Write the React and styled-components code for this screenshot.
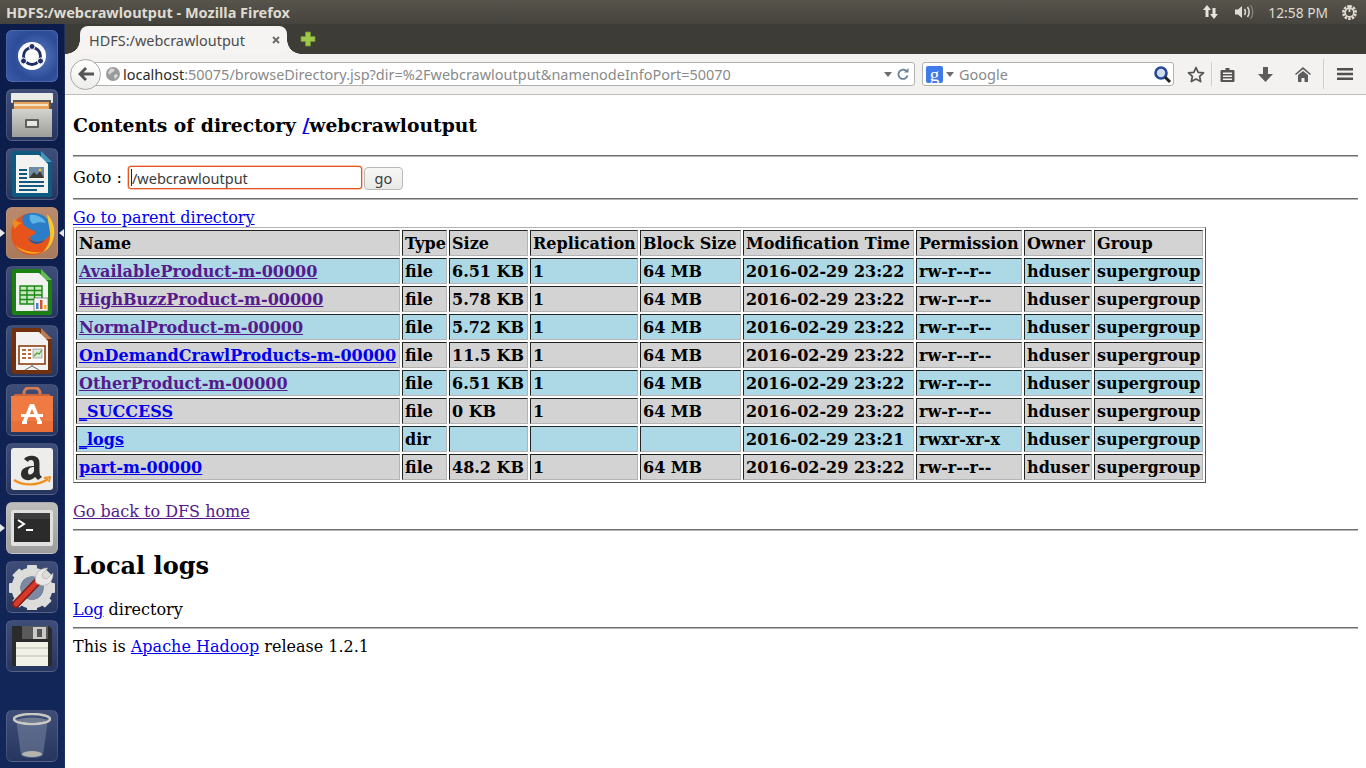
import React from 'react';
import styled, { createGlobalStyle } from 'styled-components';

const UI_FONT = '"Noto Sans", "Open Sans", sans-serif';

const rows = [
	{ name: 'AvailableProduct-m-00000', type: 'file', size: '6.51 KB', rep: '1', block: '64 MB', time: '2016-02-29 23:22', perm: 'rw-r--r--', visited: true },
	{ name: 'HighBuzzProduct-m-00000', type: 'file', size: '5.78 KB', rep: '1', block: '64 MB', time: '2016-02-29 23:22', perm: 'rw-r--r--', visited: true },
	{ name: 'NormalProduct-m-00000', type: 'file', size: '5.72 KB', rep: '1', block: '64 MB', time: '2016-02-29 23:22', perm: 'rw-r--r--', visited: true },
	{ name: 'OnDemandCrawlProducts-m-00000', type: 'file', size: '11.5 KB', rep: '1', block: '64 MB', time: '2016-02-29 23:22', perm: 'rw-r--r--' },
	{ name: 'OtherProduct-m-00000', type: 'file', size: '6.51 KB', rep: '1', block: '64 MB', time: '2016-02-29 23:22', perm: 'rw-r--r--', visited: true },
	{ name: '_SUCCESS', type: 'file', size: '0 KB', rep: '1', block: '64 MB', time: '2016-02-29 23:22', perm: 'rw-r--r--' },
	{ name: '_logs', type: 'dir', size: '', rep: '', block: '', time: '2016-02-29 23:21', perm: 'rwxr-xr-x' },
	{ name: 'part-m-00000', type: 'file', size: '48.2 KB', rep: '1', block: '64 MB', time: '2016-02-29 23:22', perm: 'rw-r--r--' },
];

const columns = [
	{ title: 'Name', width: 324 },
	{ title: 'Type', width: 45 },
	{ title: 'Size', width: 79 },
	{ title: 'Replication', width: 108 },
	{ title: 'Block Size', width: 101 },
	{ title: 'Modification Time', width: 171 },
	{ title: 'Permission', width: 106 },
	{ title: 'Owner', width: 68 },
	{ title: 'Group', width: 109 },
];

const UbuntuIcon = () => (
	<svg width="36" height="36" viewBox="0 0 36 36">
		<circle cx="18" cy="18" r="14" fill="#fff" />
		<circle cx="18" cy="18" r="8.500" fill="none" stroke="#1e2f66" strokeWidth="2.800" />
		<circle cx="18" cy="8.500" r="3" fill="#1e2f66" stroke="#fff" />
		<circle cx="9.500" cy="23" r="3" fill="#1e2f66" stroke="#fff" />
		<circle cx="26.500" cy="23" r="3" fill="#1e2f66" stroke="#fff" />
	</svg>
);

const FilesIcon = () => (
	<svg width="44" height="46" viewBox="0 0 44 46">
		<defs>
			<linearGradient id="cabinet" x1="0" y1="0" x2="0" y2="1">
				<stop offset="0" stopColor="#d2d2ce" />
				<stop offset="1" stopColor="#9d9d99" />
			</linearGradient>
		</defs>
		<rect x="1" y="1" width="42" height="10" rx="1" fill="#e9e9e5" />
		<rect x="3" y="8" width="38" height="13" fill="#5c5a56" />
		<rect x="4" y="10" width="35" height="9" fill="#e8a35c" />
		<rect x="4" y="12" width="34" height="2" fill="#f5e3c4" />
		<rect x="2" y="17" width="40" height="28" fill="url(#cabinet)" />
		<rect x="15" y="27" width="14" height="9" rx="1" fill="#5f5f5c" />
		<rect x="17" y="29" width="10" height="5" fill="#e6e6e4" />
	</svg>
);

const DocIcon = ({ edge, corner, children }) => (
	<svg width="42" height="48" viewBox="0 0 42 48">
		<path d="M1 3a2 2 0 0 1 2-2h26l12 12v32a2 2 0 0 1-2 2H3a2 2 0 0 1-2-2z" fill={edge} />
		<path d="M30 1l11 11H30z" fill={corner} />
		<path d="M5 5h23l9 9v29H5z" fill="#f2f2f0" />
		{children}
	</svg>
);

const WriterIcon = () => (
	<DocIcon edge="#0e5a80" corner="#3f95c0">
		<path d="M8 19h8v2H8zM8 23h8v2H8zM8 27h8v2H8zM8 31h25v2H8zM8 35h25v2H8zM8 39h18v2H8z" fill="#12587f" />
		<rect x="18" y="17" width="15" height="11" fill="#6c8ca8" />
		<path d="M18 28l5-6 3 3 3-4 4 7z" fill="#3a3a30" />
		<circle cx="29" cy="20" r="1.500" fill="#f0c040" />
	</DocIcon>
);

const CalcIcon = () => (
	<DocIcon edge="#1a8012" corner="#63bb58">
		<path d="M9 18h22v18H9z" fill="#c8e6c0" />
		<path d="M9 18h22v18H9zM9 22.500h22M9 27h22M9 31.500h22M16 18v18M23.500 18v18" fill="none" stroke="#1a8a14" strokeWidth="1.400" />
		<rect x="23" y="30" width="14" height="13" fill="#f4f4f4" stroke="#555" strokeWidth=".6" />
		<rect x="25" y="35" width="2.500" height="6" fill="#3d86c6" />
		<rect x="29" y="32" width="2.500" height="9" fill="#d9502c" />
		<rect x="33" y="37" width="2.500" height="4" fill="#eeb32c" />
	</DocIcon>
);

const ImpressIcon = () => (
	<DocIcon edge="#71310e" corner="#bd7b52">
		<rect x="8" y="19" width="26" height="18" fill="#fff" stroke="#8c3f12" strokeWidth="1.600" />
		<path d="M11 22h4v2h-4zM17 22h3v2h-3zM11 26h4v2h-4zM17 26h3v2h-3zM11 30h4v2h-4zM17 30h3v2h-3z" fill="#b9683a" />
		<rect x="22" y="22" width="9" height="9" fill="#dfe6d8" stroke="#666" strokeWidth=".5" />
		<path d="M23 29l3-3 2 1 3-4" stroke="#47a030" fill="none" strokeWidth="1.200" />
		<path d="M21 37v2l-7 4M21 39l7 4" stroke="#666" strokeWidth="1" fill="none" />
	</DocIcon>
);

const SoftwareIcon = () => (
	<svg width="44" height="46" viewBox="0 0 44 46">
		<path d="M14 10V6a5 5 0 0 1 5-5h6a5 5 0 0 1 5 5v4" fill="none" stroke="#d87b50" strokeWidth="3" />
		<path d="M2 10l3-3h34l3 3z" fill="#c9653a" />
		<rect x="1" y="9" width="42" height="36" fill="#ef7a42" />
		<rect x="1" y="34" width="42" height="11" fill="#e96f39" />
		<path d="M20 17h4l8 19h-4l-6-14-6 14h-4z" fill="#fff" />
		<rect x="11" y="27" width="22" height="3" fill="#fff" />
		<rect x="12" y="34" width="5" height="3" fill="#fff" />
		<rect x="27" y="34" width="5" height="3" fill="#fff" />
	</svg>
);

const AmazonIcon = () => (
	<svg width="42" height="42" viewBox="0 0 42 42">
		<rect x="0" y="0" width="42" height="42" rx="3" fill="#ededeb" />
		<path d="M13 11c2-4 13-5 15 1 1 3 0 11 1 15l2 2-4 3-3-3c-4 5-14 4-14-3 0-7 8-8 13-8 0-3 0-6-3-6-2 0-3 1-3 2zM23 19c-3 0-6 1-6 5 0 4 5 3 6-1z" fill="#2d2d2d" fillRule="evenodd" />
		<path d="M3 32c9 6 24 6 34-1" fill="none" stroke="#f09020" strokeWidth="2.200" />
		<path d="M33 30l6-1-1 5" fill="none" stroke="#f09020" strokeWidth="1.800" />
	</svg>
);

const TerminalIcon = () => (
	<svg width="42" height="36" viewBox="0 0 42 36">
		<rect x="0" y="0" width="42" height="36" rx="2" fill="#e0e0de" />
		<rect x="3" y="3" width="36" height="29" fill="#2b2b2b" />
		<rect x="3" y="3" width="36" height="6" fill="#3d3d3d" />
		<path d="M7 10l6 4-6 4" fill="none" stroke="#fff" strokeWidth="2" />
		<path d="M15 20h7" stroke="#fff" strokeWidth="2" />
	</svg>
);

const SettingsIcon = () => (
	<svg width="46" height="46" viewBox="0 0 46 46">
		<g transform="translate(23 24)">
			<circle r="16" fill="none" stroke="#dcdcda" strokeWidth="9" />
			{[0, 45, 90, 135, 180, 225, 270, 315].map((a) => (
				<rect key={a} x="-5" y="-23" width="10" height="10" rx="1" fill="#dcdcda" transform={`rotate(${a})`} />
			))}
			<circle r="11.500" fill="#7c89a3" />
		</g>
		<path d="M7 40L30 16" stroke="#7e1d16" strokeWidth="8" strokeLinecap="round" />
		<path d="M7 40L30 16" stroke="#d8392b" strokeWidth="5" strokeLinecap="round" />
		<path d="M27 19c-3-7 3-16 12-15l-6 6 1 4 4 1 6-6c1 9-7 14-13 12z" fill="#e8e8e6" stroke="#9a9a98" strokeWidth=".5" />
	</svg>
);

const DiskIcon = () => (
	<svg width="42" height="42" viewBox="0 0 42 42">
		<path d="M1 1h37l3 3v37H1z" fill="#2b2b2b" />
		<rect x="11" y="1" width="26" height="13" fill="#5a5a5a" />
		<rect x="22" y="2" width="13" height="12" fill="#c9c9c7" />
		<rect x="26" y="4" width="5" height="8" fill="#555" />
		<rect x="5" y="17" width="32" height="24" fill="#f1f1e8" />
		<path d="M5 23h32M5 31h32" stroke="#b9b9ad" />
	</svg>
);

const TrashIcon = () => (
	<svg width="38" height="46" viewBox="0 0 38 46">
		<path d="M3 6l5 36c3 4 19 4 22 0l5-36z" fill="#7e8ba6" fillOpacity=".5" />
		<ellipse cx="19" cy="6" rx="18" ry="5" fill="none" stroke="#c9c9c4" strokeWidth="2.500" />
		<ellipse cx="19" cy="7" rx="13" ry="2.500" fill="#6f7b91" />
		<ellipse cx="19" cy="41" rx="10" ry="3" fill="#b5b5b0" />
	</svg>
);

const FirefoxIcon = () => (
	<svg width="48" height="48" viewBox="0 0 48 48">
		<circle cx="24" cy="25" r="21" fill="#e6531b" />
		<path d="M15 7c7-5 20-4 26 5 3 5 3 11 0 15-5 6-12 7-17 4-3-2-2-4 1-5 4-1 3-4-1-5-4-2-7-3-8-5-2-3-2-6-1-9z" fill="#2a7dc6" />
		<path d="M22 6c6-1 13 2 16 8-4-1-9-1-13 1-3-2-4-6-3-9z" fill="#5cb3e6" />
		<path d="M39 5c7 7 9 17 6 26-2 6-6 10-11 13 6-6 9-13 8-21-1-6-2-12-3-18z" fill="#f9c62e" />
		<path d="M7 36c6 8 18 11 27 7-9 1-20-1-27-7z" fill="#f8a81f" />
		<path d="M20 29c4 4 11 5 17 2-4 5-13 6-17-2z" fill="#1f5aa0" />
		<path d="M5 9c-1 5 0 8 2 11 2-3 4-5 7-6-3-1-7-2-9-5z" fill="#f08a1c" />
	</svg>
);

const launcherItems = [
	{ id: 'ubuntu', tone: 'ubuntu', icon: <UbuntuIcon /> },
	{ id: 'files', tone: 'slate', icon: <FilesIcon /> },
	{ id: 'writer', tone: 'slate', icon: <WriterIcon /> },
	{ id: 'firefox', tone: 'firefox', icon: <FirefoxIcon />, open: true, focused: true },
	{ id: 'calc', tone: 'slate', icon: <CalcIcon /> },
	{ id: 'impress', tone: 'slate', icon: <ImpressIcon /> },
	{ id: 'software', tone: 'slate', icon: <SoftwareIcon /> },
	{ id: 'amazon', tone: 'slate', icon: <AmazonIcon /> },
	{ id: 'terminal', tone: 'active', icon: <TerminalIcon />, open: true },
	{ id: 'settings', tone: 'slate', icon: <SettingsIcon /> },
	{ id: 'disk', tone: 'slate', icon: <DiskIcon /> },
];

const GlobalStyle = createGlobalStyle`
	html, body {
		margin: 0;
		padding: 0;
		overflow: hidden;
	}
`;

const Desktop = styled.div`
	display: flex;
	flex-direction: column;
	width: 1366px;
	height: 768px;
	overflow: hidden;
	background: #fff;
`;

const TitleBar = styled.header`
	display: flex;
	align-items: center;
	height: 24px;
	padding: 0 8px 0 6px;
	background: linear-gradient(#57544c, #45433d);
	font-family: ${UI_FONT};
`;

const WindowTitle = styled.h1`
	flex: 1;
	margin: 0;
	font-size: 14.500px;
	font-weight: 700;
	color: #dfdbd2;
`;

const Indicator = styled.span`
	display: flex;
	align-items: center;
	margin-left: ${(p) => p.$gap || 0}px;
`;

const Clock = styled.span`
	margin-left: 13px;
	font-size: 13.800px;
	color: #dfdbd2;
`;

const Main = styled.div`
	display: flex;
	flex: 1;
	min-height: 0;
`;

const Launcher = styled.nav`
	display: flex;
	flex-direction: column;
	gap: 7px;
	flex: none;
	box-sizing: border-box;
	width: 65px;
	padding: 6px 0 6px 6px;
	background: linear-gradient(#0b1c4a, #14275a);
	border-right: 1px solid #20305c;
`;

const tileTones = {
	ubuntu: 'radial-gradient(circle at 60% 50%, #5c7cc0, #2c4c98 60%, #3a5ca8)',
	slate: 'linear-gradient(#3f4e78, #27365f)',
	firefox: 'linear-gradient(#b98a6c, #a8795c)',
	active: 'linear-gradient(#bdbdbc, #9d9d9d)',
};

const Tile = styled.div`
	position: relative;
	display: flex;
	align-items: center;
	justify-content: center;
	flex: none;
	box-sizing: border-box;
	width: 52px;
	height: 52px;
	margin-top: ${(p) => (p.$pushed ? 'auto' : '0')};
	border-radius: 6px;
	border: 1px solid rgba(255, 255, 255, 0.12);
	background: ${(p) => tileTones[p.$tone]};
`;

const OpenPip = styled.span`
	position: absolute;
	left: -7px;
	top: 21px;
	border-style: solid;
	border-width: 4px 0 4px 5px;
	border-color: transparent transparent transparent #e8e8e8;
`;

const FocusPip = styled.span`
	position: absolute;
	right: -7px;
	top: 21px;
	border-style: solid;
	border-width: 4px 5px 4px 0;
	border-color: transparent #e8e8e8 transparent transparent;
`;

const Browser = styled.div`
	display: flex;
	flex-direction: column;
	flex: 1;
	min-width: 0;
	font-family: ${UI_FONT};
`;

const TabStrip = styled.div`
	display: flex;
	align-items: flex-end;
	height: 30px;
	padding-left: 15px;
	background: #3d3c37;
`;

const Tab = styled.div`
	position: relative;
	display: flex;
	align-items: center;
	justify-content: space-between;
	box-sizing: border-box;
	width: 207px;
	height: 28px;
	padding: 0 6px 0 9px;
	border-radius: 8px 8px 0 0;
	background: #f5f4f2;
	font-size: 14.450px;
	color: #4c4c4c;

	&::before,
	&::after {
		content: '';
		position: absolute;
		bottom: 0;
		width: 14px;
		height: 14px;
	}

	&::before {
		left: -14px;
		background: radial-gradient(circle at 0 0, transparent 13.500px, #f3f2f0 14px);
	}

	&::after {
		right: -14px;
		background: radial-gradient(circle at 100% 0, transparent 13.500px, #f3f2f0 14px);
	}
`;

const NewTab = styled.span`
	display: flex;
	align-self: center;
	margin-left: 13px;
`;

const Toolbar = styled.div`
	display: flex;
	align-items: center;
	box-sizing: border-box;
	height: 41px;
	padding-left: 5px;
	background: #f3f2f0;
	border-bottom: 1px solid #bdbdbb;
`;

const BackButton = styled.span`
	position: relative;
	z-index: 1;
	display: flex;
	align-items: center;
	justify-content: center;
	flex: none;
	box-sizing: border-box;
	width: 31px;
	height: 31px;
	border-radius: 50%;
	border: 1px solid #a9a9a7;
	background: linear-gradient(#fff, #ececea);
`;

const FieldBox = styled.div`
	display: flex;
	align-items: center;
	flex: none;
	box-sizing: border-box;
	height: 24px;
	border: 1px solid #b2b2b0;
	border-radius: 3px;
	background: #fff;
	font-size: 14.480px;
`;

const UrlBar = styled(FieldBox)`
	width: 830px;
	margin-left: -16px;
	padding: 0 5px 0 20px;
`;

const SearchBar = styled(FieldBox)`
	width: 252px;
	margin-left: 7px;
	padding: 0 1px 0 3px;
`;

const Globe = styled.span`
	display: flex;
	margin-right: 3px;
`;

const Host = styled.span`
	color: #2b2b2b;
`;

const UrlRest = styled.span`
	flex: 1;
	color: #8a8a8a;
	white-space: nowrap;
`;

const DropArrow = styled.span`
	flex: none;
	width: 0;
	height: 0;
	margin: 0 ${(p) => p.$right}px 0 ${(p) => p.$left}px;
	border-style: solid;
	border-width: 5px 4px 0;
	border-color: #6d6d6d transparent transparent;
`;

const EngineBadge = styled.span`
	display: flex;
	align-items: center;
	justify-content: center;
	flex: none;
	width: 17px;
	height: 17px;
	border-radius: 2px;
	background: #4079e8;
	font-family: "Liberation Serif", serif;
	font-size: 19px;
	line-height: 13px;
	color: #fff;
`;

const SearchHint = styled.span`
	flex: 1;
	color: #8a8a8a;
`;

const ToolSlot = styled.span`
	display: flex;
	align-items: center;
	justify-content: center;
	flex: none;
	box-sizing: border-box;
	width: ${(p) => p.$width}px;
	height: ${(p) => p.$lineHeight || 24}px;
	margin-left: ${(p) => p.$left || 0}px;
	border-right: ${(p) => (p.$line ? '1px solid #cfcecb' : 'none')};
	border-left: ${(p) => (p.$lead ? '1px solid #cfcecb' : 'none')};
`;

const Page = styled.main`
	flex: 1;
	box-sizing: border-box;
	padding: 0 8px;
	overflow: hidden;
	background: #fff;
	font-family: "DejaVu Serif", serif;
	font-size: 16px;
	color: #000;

	a {
		color: #0000ee;
		text-decoration: underline;
	}
`;

const Visited = styled.a`
	&& {
		color: #551a8b;
	}
`;

const Rule = styled.hr`
	margin: 8px 0;
	border: 0;
	border-top: 1px solid #6e6e6e;
	border-bottom: 1px solid #b4b4b4;
	height: 0;
`;

const DirTitle = styled.h3`
	margin: 18.720px 0 19.700px;
	font-size: 18.720px;
`;

const SectionTitle = styled.h2`
	margin: 19.920px 0;
	font-size: 24px;
`;

const GotoForm = styled.form`
	display: flex;
	align-items: center;
	height: 25px;
`;

const InputWrap = styled.span`
	position: relative;
	display: flex;
	margin-left: 6px;
`;

const Caret = styled.span`
	position: absolute;
	left: 3px;
	top: 3px;
	width: 1px;
	height: 17px;
	background: #222;
`;

const GotoInput = styled.input`
	box-sizing: border-box;
	width: 234px;
	height: 23px;
	padding: 0 3px;
	border: 1px solid #e4551f;
	border-radius: 3px;
	outline: none;
	box-shadow: 0 0 0 0.5px rgba(228, 85, 31, 0.7);
	background: #fff;
	font-family: ${UI_FONT};
	font-size: 14.500px;
	color: #3c3c3c;
`;

const GoButton = styled.button`
	box-sizing: border-box;
	width: 39px;
	height: 23px;
	margin: 1px 0 0 2px;
	padding: 0;
	border: 1px solid #b9b9b7;
	border-radius: 4px;
	background: linear-gradient(#f7f7f6, #e9e9e7);
	font-family: ${UI_FONT};
	font-size: 14.500px;
	color: #3c3c3c;
`;

const Listing = styled.table`
	table-layout: fixed;
	box-sizing: border-box;
	width: 1133px;
	border-spacing: 2px;
	border-width: 1px;
	border-style: solid;
	border-color: #b4b4b4 #555 #555 #b4b4b4;
	font-size: 16px;
	font-weight: 700;
`;

const Cell = styled.td`
	box-sizing: border-box;
	width: ${(p) => (p.$width ? `${p.$width}px` : 'auto')};
	height: 26px;
	padding: 1px 0 1px 2px;
	border-width: 1px;
	border-style: solid;
	border-color: #222 #b4b4b4 #b4b4b4 #222;
	background: ${(p) => (p.$blue ? '#add8e6' : '#d3d3d3')};
	text-align: left;
	white-space: nowrap;
	vertical-align: middle;
`;

const Spacer = styled.div`
	height: 19px;
`;

const ShortLine = styled.div`
	line-height: 19px;
`;

export default function App() {
	return (
		<Desktop>
			<GlobalStyle />
			<TitleBar>
				<WindowTitle>HDFS:/webcrawloutput - Mozilla Firefox</WindowTitle>
				<Indicator>
					<svg width="18" height="18" viewBox="0 0 18 18">
						<path d="M5 2L1 7h2.500v7h3V7H9zM12 16l4-5h-2.500V5h-3v6H8z" fill="#e6e3dc" />
					</svg>
				</Indicator>
				<Indicator $gap={14}>
					<svg width="21" height="16" viewBox="0 0 21 16">
						<path d="M1 5.500h3L8 2v12l-4-3.500H1z" fill="#dfdbd2" />
						<path d="M10.500 5c1.200 1.800 1.200 4.200 0 6" stroke="#dfdbd2" strokeWidth="1.500" fill="none" />
						<path d="M13.500 3c2 3 2 7 0 10" stroke="#dfdbd2" strokeWidth="1.500" fill="none" />
						<path d="M16.500 1c3 4 3 10 0 14" stroke="#8b887f" strokeWidth="1.200" fill="none" />
					</svg>
				</Indicator>
				<Clock>12:58 PM</Clock>
				<Indicator $gap={13}>
					<svg width="17" height="17" viewBox="0 0 17 17">
						<path d="M8.500 2.500a6 6 0 1 1-.01 0" fill="none" stroke="#dfdbd2" strokeWidth="3" strokeDasharray="2.400 1.100" />
						<circle cx="8.500" cy="8.500" r="4.300" fill="none" stroke="#dfdbd2" strokeWidth="1.600" />
						<rect x="7.600" y="1" width="1.800" height="7" fill="#dfdbd2" />
					</svg>
				</Indicator>
			</TitleBar>
			<Main>
				<Launcher>
					{launcherItems.map((item) => (
						<Tile key={item.id} $tone={item.tone}>
							{item.open && <OpenPip />}
							{item.focused && <FocusPip />}
							{item.icon}
						</Tile>
					))}
					<Tile $tone="slate" $pushed>
						<TrashIcon />
					</Tile>
				</Launcher>
				<Browser>
					<TabStrip>
						<Tab>
							HDFS:/webcrawloutput
							<svg width="10" height="10" viewBox="0 0 10 10">
								<path d="M2 2l6 6M8 2l-6 6" stroke="#6d6d6d" strokeWidth="2" />
							</svg>
						</Tab>
						<NewTab>
							<svg width="16" height="16" viewBox="0 0 16 16">
								<path d="M5.500 1h5v4.500H15v5h-4.500V15h-5v-4.500H1v-5h4.500z" fill="#9fc74a" stroke="#74962e" strokeWidth=".8" />
							</svg>
						</NewTab>
					</TabStrip>
					<Toolbar>
						<BackButton>
							<svg width="18" height="16" viewBox="0 0 18 16">
								<path d="M8 1L1 8l7 7 2-2-3.500-3.500H17v-3H6.500L10 3z" fill="#555" />
							</svg>
						</BackButton>
						<UrlBar>
							<Globe>
								<svg width="14" height="14" viewBox="0 0 14 14">
									<circle cx="7" cy="7" r="7" fill="#9a9a9a" />
									<path d="M4 2c2-1 4 0 5 1l-2 2-2 1-1 2-2-2zM8 8l3-1 1 2-3 3-1-2z" fill="#d6d6d6" />
								</svg>
							</Globe>
							<Host>localhost</Host>
							<UrlRest>:50075/browseDirectory.jsp?dir=%2Fwebcrawloutput&namenodeInfoPort=50070</UrlRest>
							<DropArrow $left={0} $right={5} />
							<svg width="12" height="12" viewBox="0 0 12 12">
								<path d="M10.500 7.500A4.600 4.600 0 1 1 9 2.800" fill="none" stroke="#6d7f96" strokeWidth="1.800" />
								<path d="M7 4.500h4.500V0z" fill="#6d7f96" />
							</svg>
						</UrlBar>
						<SearchBar>
							<EngineBadge>g</EngineBadge>
							<DropArrow $left={3} $right={5} />
							<SearchHint>Google</SearchHint>
							<svg width="19" height="19" viewBox="0 0 19 19">
								<circle cx="8" cy="8" r="5.500" fill="#cfdcf2" stroke="#27489a" strokeWidth="2.600" />
								<path d="M12 12l5 5" stroke="#222" strokeWidth="3" />
							</svg>
						</SearchBar>
						<ToolSlot $width={31} $left={7} $line>
							<svg width="18" height="17" viewBox="0 0 18 17">
								<path d="M9 1.500l2.200 4.800 5.300.6-3.900 3.500 1.100 5.200L9 13l-4.700 2.600 1.100-5.200L1.500 6.900l5.300-.6z" fill="none" stroke="#555" strokeWidth="1.700" strokeLinejoin="round" />
							</svg>
						</ToolSlot>
						<ToolSlot $width={30}>
							<svg width="15" height="15" viewBox="0 0 15 15">
								<path d="M1.500 3h4V1h4v2h4a1 1 0 0 1 1 1v10a1 1 0 0 1-1 1h-12a1 1 0 0 1-1-1V4a1 1 0 0 1 1-1z" fill="#555" />
								<path d="M3 5.500h9v1.500H3zM3 8.500h9V10H3zM3 11.500h9V13H3z" fill="#f3f2f0" />
							</svg>
						</ToolSlot>
						<ToolSlot $width={46}>
							<svg width="15" height="15" viewBox="0 0 15 15">
								<path d="M5 0h5v7h5l-7.500 8L0 7h5z" fill="#5c5c5c" />
							</svg>
						</ToolSlot>
						<ToolSlot $width={30}>
							<svg width="16" height="15" viewBox="0 0 16 15">
								<path d="M8 0l8 7-1 1-7-5.700L1 8 0 7z" fill="#5c5c5c" />
								<path d="M8 4l5 4v7H9.500v-4h-3v4H3V8z" fill="#5c5c5c" />
							</svg>
						</ToolSlot>
						<ToolSlot $width={43} $left={5} $lineHeight={30} $lead>
							<svg width="16" height="12" viewBox="0 0 16 12">
								<path d="M0 0h16v2.500H0zM0 4.700h16v2.500H0zM0 9.500h16V12H0z" fill="#505050" />
							</svg>
						</ToolSlot>
					</Toolbar>
					<Page>
						<DirTitle>
							Contents of directory <a href="#root">/</a>webcrawloutput
						</DirTitle>
						<Rule />
						<GotoForm onSubmit={(e) => e.preventDefault()}>
							Goto :
							<InputWrap>
								<GotoInput defaultValue="/webcrawloutput" />
								<Caret />
							</InputWrap>
							<GoButton>go</GoButton>
						</GotoForm>
						<Rule />
						<ShortLine>
							<a href="#root">Go to parent directory</a>
						</ShortLine>
						<Listing>
							<tbody>
								<tr>
									{columns.map((col) => (
										<Cell as="th" key={col.title} $width={col.width}>
											{col.title}
										</Cell>
									))}
								</tr>
								{rows.map((row, i) => {
									const Link = row.visited ? Visited : 'a';
									const blue = i % 2 === 0;
									return (
										<tr key={row.name}>
											<Cell $blue={blue}>
												<Link href="#root">{row.name}</Link>
											</Cell>
											<Cell $blue={blue}>{row.type}</Cell>
											<Cell $blue={blue}>{row.size}</Cell>
											<Cell $blue={blue}>{row.rep}</Cell>
											<Cell $blue={blue}>{row.block}</Cell>
											<Cell $blue={blue}>{row.time}</Cell>
											<Cell $blue={blue}>{row.perm}</Cell>
											<Cell $blue={blue}>hduser</Cell>
											<Cell $blue={blue}>supergroup</Cell>
										</tr>
									);
								})}
							</tbody>
						</Listing>
						<Spacer />
						<ShortLine>
							<Visited href="#root">Go back to DFS home</Visited>
						</ShortLine>
						<Rule />
						<SectionTitle>Local logs</SectionTitle>
						<ShortLine>
							<a href="#root">Log</a> directory
						</ShortLine>
						<Rule />
						<ShortLine>
							This is <a href="#root">Apache Hadoop</a> release 1.2.1
						</ShortLine>
					</Page>
				</Browser>
			</Main>
		</Desktop>
	);
}
